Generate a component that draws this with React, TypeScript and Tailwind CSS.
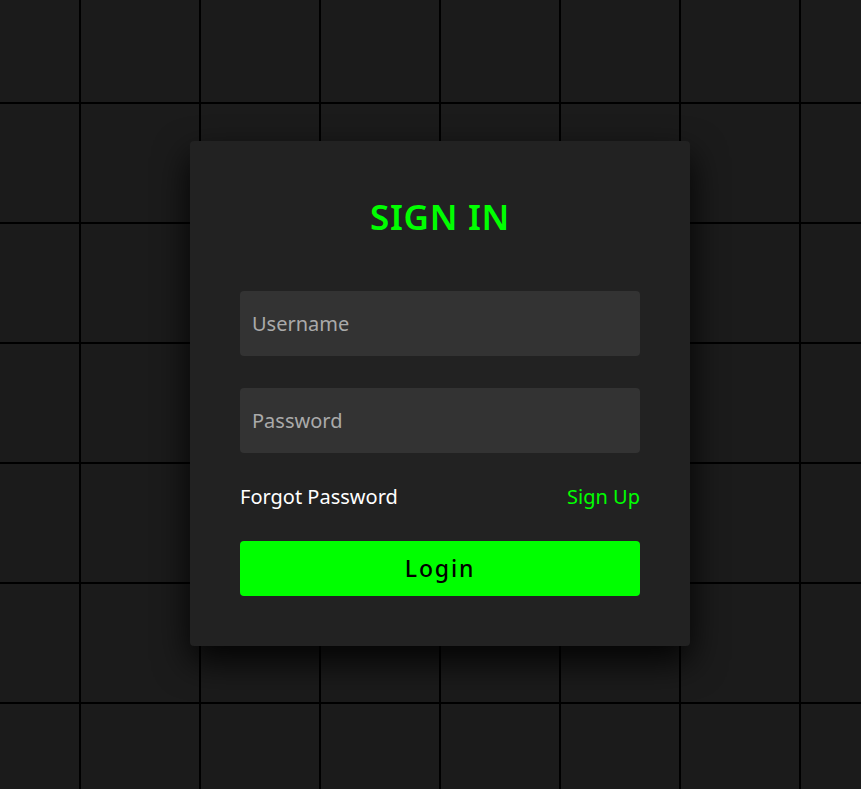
export default function App() {
  return (
    <div
      className="
        flex items-center justify-center w-full h-screen pl-[19px] pb-[2px] overflow-hidden
        bg-[#1b1b1b] bg-[linear-gradient(to_right,#000_2px,transparent_2px),linear-gradient(to_bottom,#000_2px,transparent_2px)]
        bg-[size:120px_120px] bg-[position:79px_102px]
      "
      style={{ fontFamily: '"Noto Sans", "Open Sans", sans-serif' }}
    >
      <SignIn />
    </div>
  );
}

function SignIn() {
  return (
    <div className="flex flex-col w-[500px] px-[50px] pt-[50px] pb-[50px] bg-[#222] rounded-[4px] shadow-[0_15px_35px_rgba(0,0,0,0.9)]">
      <h2 className="h-[52px] flex items-center justify-center text-[35px] font-semibold text-[#00ff00] tracking-[0.02em]">
        SIGN IN
      </h2>
      <div className="flex flex-col gap-8 mt-12">
        <Field placeholder="Username" />
        <Field placeholder="Password" type="password" />
        <div className="flex justify-between items-center h-6 text-[20px]">
          <a className="text-white cursor-pointer">Forgot Password</a>
          <a className="text-[#00ff00] cursor-pointer">Sign Up</a>
        </div>
        <button className="h-[55px] w-full rounded-[4px] bg-[#00ff00] text-black text-[23px] font-medium tracking-[0.08em] cursor-pointer">
          Login
        </button>
      </div>
    </div>
  );
}

function Field({
  placeholder,
  type = "text"
}: {
  placeholder: string;
  type?: string;
}) {
  return (
    <input
      type={type}
      placeholder={placeholder}
      className="h-[65px] w-full px-3 rounded-[4px] bg-[#333] text-white text-[20px] outline-none placeholder:text-[#aaa]"
    />
  );
}
